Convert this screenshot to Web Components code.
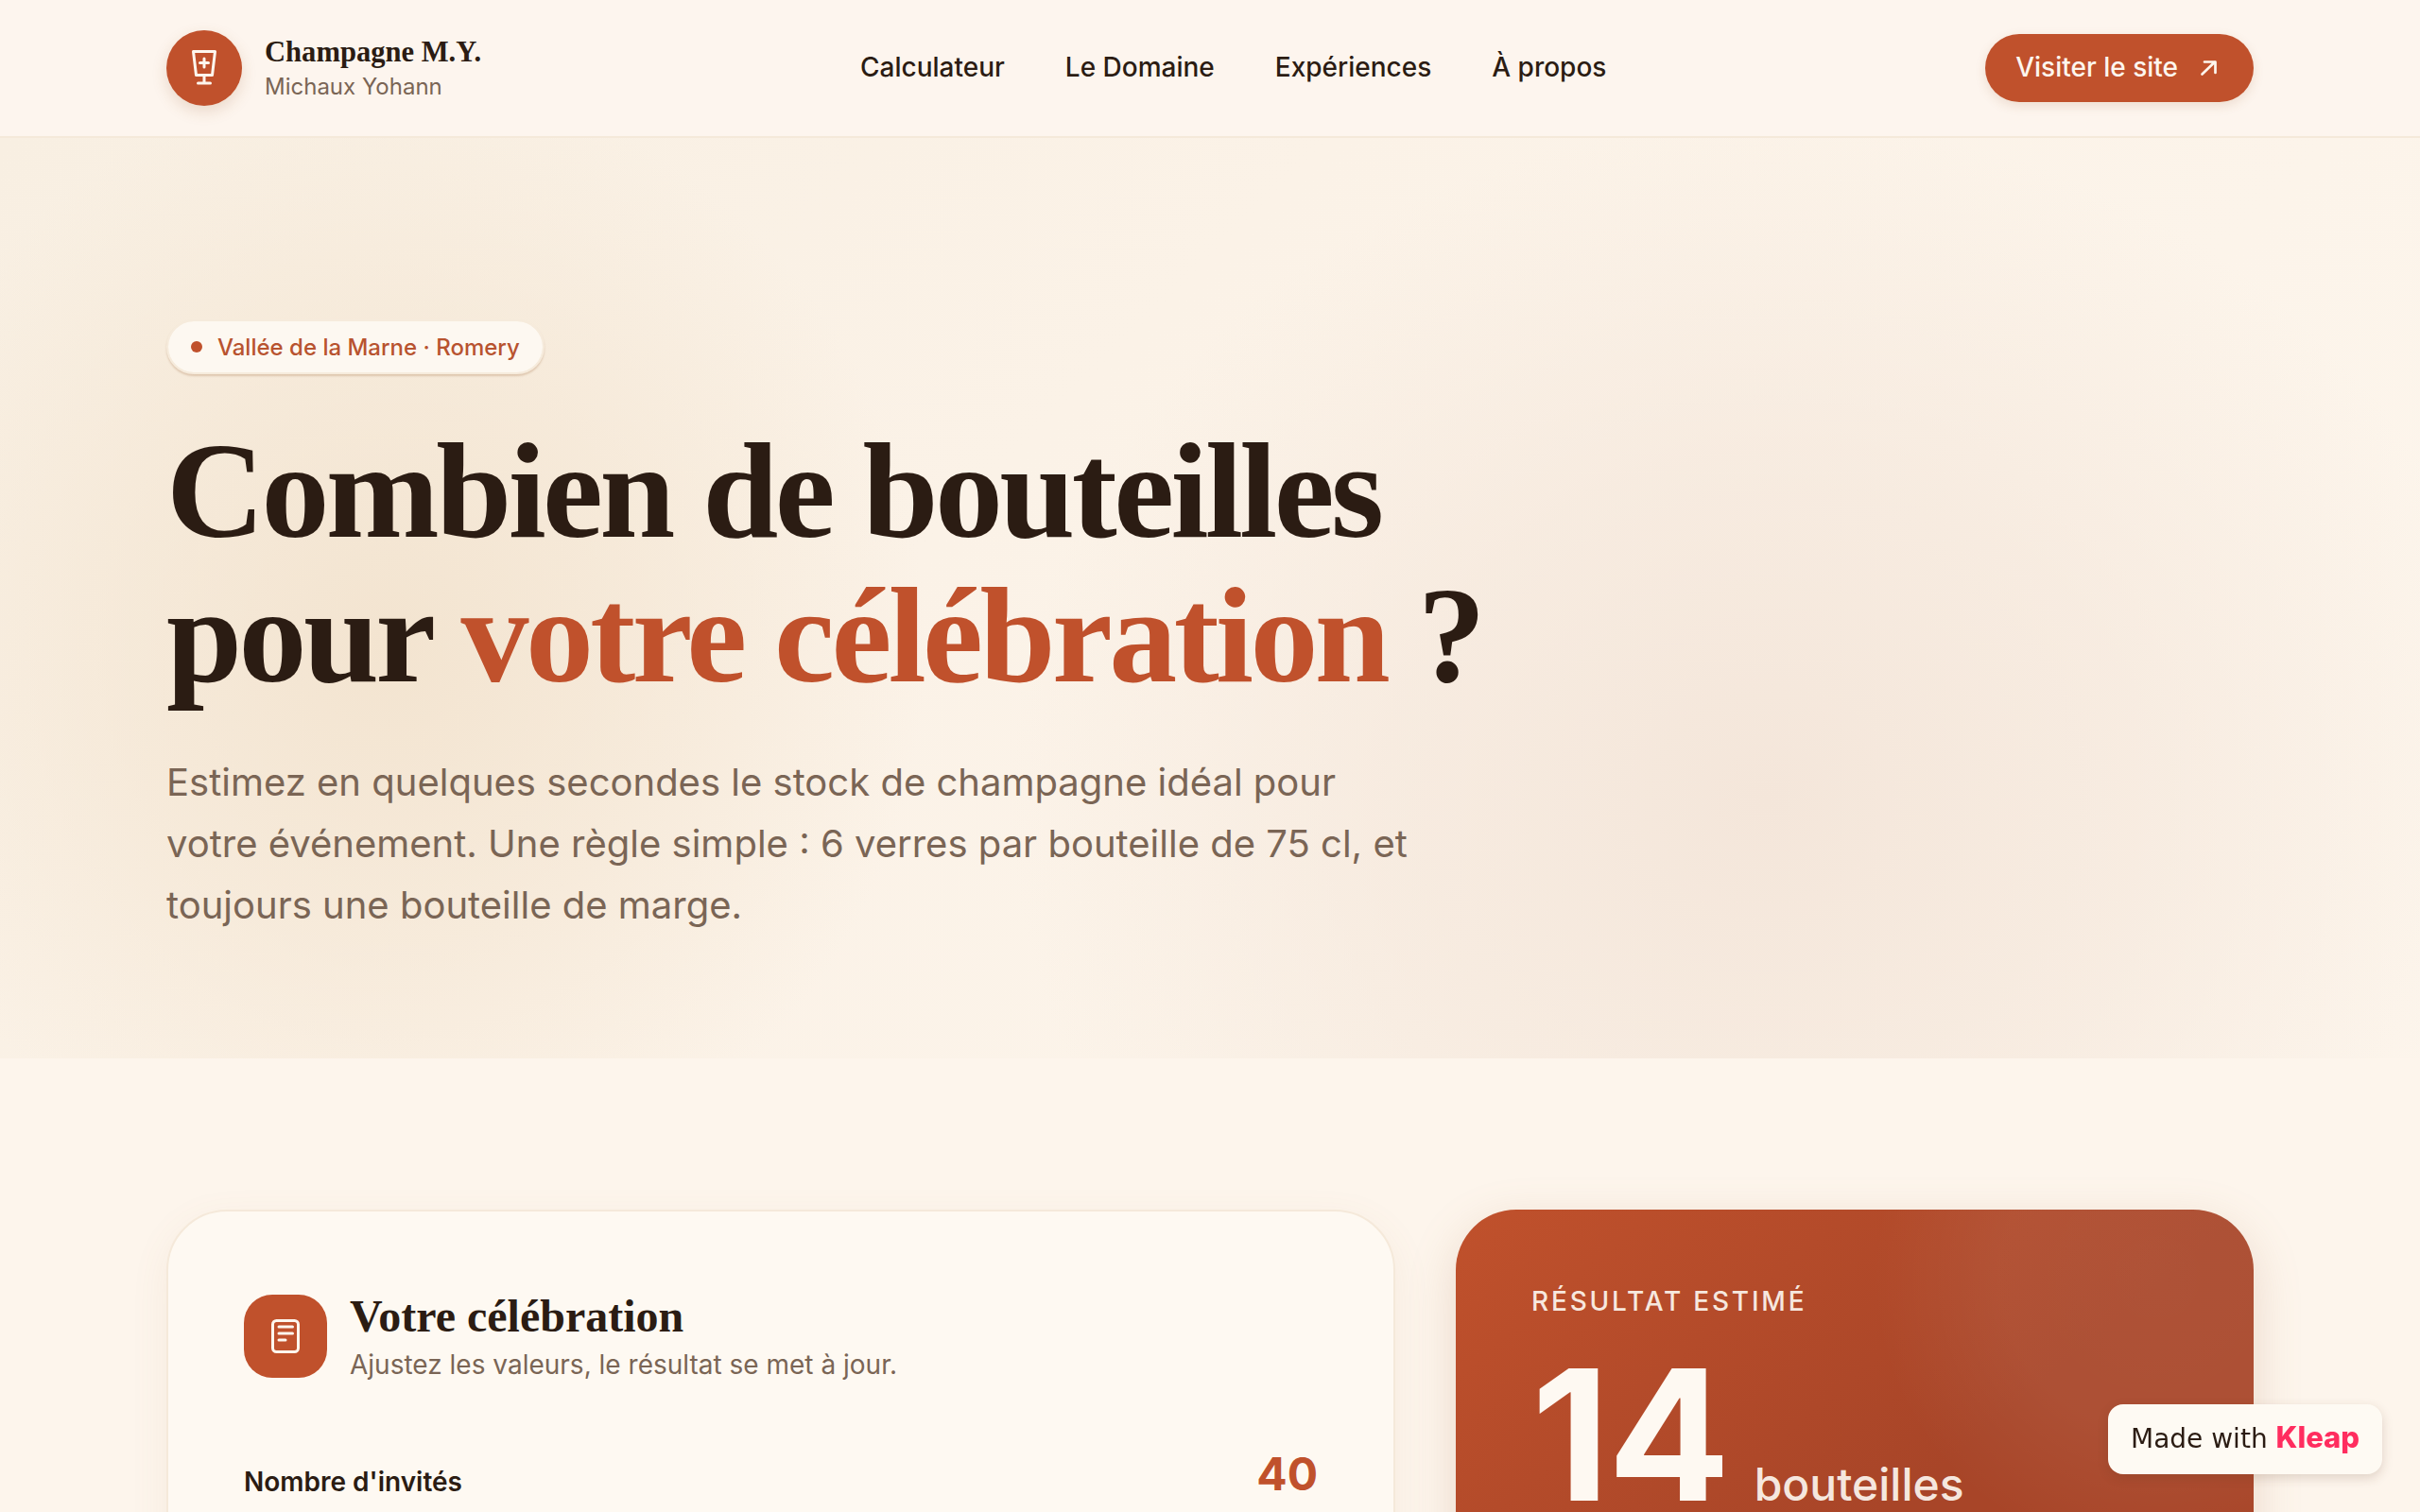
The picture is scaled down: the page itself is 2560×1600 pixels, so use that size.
<!DOCTYPE html>
<html lang="fr">
<head>
<meta charset="utf-8">
<title>Champagne M.Y.</title>
<style>
  html, body { margin: 0; height: 1600px; overflow: hidden; background: #fdf5ec; }
  body { font-family: "Inter", "Liberation Sans", sans-serif; color: #2b1c13; }
</style>
</head>
<body>
<site-header>
  <nav-link>Calculateur</nav-link>
  <nav-link>Le Domaine</nav-link>
  <nav-link>Expériences</nav-link>
  <nav-link>À propos</nav-link>
</site-header>
<hero-section>
  <pill-badge>Vallée de la Marne · Romery</pill-badge>
  <span slot="line1">Combien de bouteilles</span>
  <span slot="line2">pour <em style="font-style:normal;color:#c0512c">votre célébration</em> ?</span>
  <span slot="lead">Estimez en quelques secondes le stock de champagne idéal pour votre événement. Une règle simple : 6 verres par bouteille de 75 cl, et toujours une bouteille de marge.</span>
</hero-section>
<calc-section>
  <calc-card></calc-card>
  <result-card></result-card>
</calc-section>
<kleap-badge></kleap-badge>

<script>
// header
class SiteHeader extends HTMLElement {
  constructor() {
    super();
    this.attachShadow({ mode: "open" }).innerHTML = `
      <style>
        :host { display: flex; align-items: center; justify-content: space-between; height: 144px; padding: 0 176px; background: #fdf5ee; border-bottom: 2px solid #f5e9da; position: relative; }
        .brand { display: flex; align-items: center; gap: 24px; width: 734px; }
        .logo { width: 80px; height: 80px; border-radius: 50%; background: #c0512c; display: flex; align-items: center; justify-content: center; box-shadow: 0 6px 16px rgba(150,90,40,.18); }
        .name { font: bold 30.6px/36px "Liberation Serif", serif; color: #2b1c13; }
        .sub { font: 400 24px/32px "Inter", sans-serif; color: #7a6555; margin-top: 3px; }
        nav { display: flex; gap: 64px; flex: 1; margin-top: -2px; }
        .cta { display: flex; align-items: center; gap: 20px; height: 72px; padding: 0 36px 0 32px; border-radius: 36px; background: #c0512c; color: #fdf6ee; font: 500 28px "Inter", sans-serif; box-shadow: 0 4px 12px rgba(150,90,40,.15); }
        .cta span { margin-top: -2px; }
      </style>
      <div class="brand">
        <div class="logo">
          <svg width="32" height="40" viewBox="0 0 32 40" fill="none" stroke="#fdf6ee" stroke-width="3" stroke-linecap="round" stroke-linejoin="round">
            <path d="M4.5 2.500H27.500L24.500 27.500H7.500Z"/>
            <path d="M16 27.500V36M9.500 36H22.500"/>
            <path d="M16 10V19M11.500 14.500H20.500"/>
          </svg>
        </div>
        <div>
          <div class="name">Champagne M.Y.</div>
          <div class="sub">Michaux Yohann</div>
        </div>
      </div>
      <nav><slot></slot></nav>
      <div class="cta"><span>Visiter le site</span>
        <svg width="24" height="24" viewBox="0 0 24 24" fill="none" stroke="#fdf6ee" stroke-width="2.700" stroke-linecap="round" stroke-linejoin="round"><path d="M5.500 18.500 19 5.500M8 5.500H19.500V17"/></svg>
      </div>`;
  }
}
customElements.define("site-header", SiteHeader);

class NavLink extends HTMLElement {
  constructor() {
    super();
    this.attachShadow({ mode: "open" }).innerHTML = `
      <style>:host { display: block; font: 500 28px/36px "Inter", sans-serif; color: #2b1c13; }</style>
      <slot></slot>`;
  }
}
customElements.define("nav-link", NavLink);

// hero
class HeroSection extends HTMLElement {
  constructor() {
    super();
    this.attachShadow({ mode: "open" }).innerHTML = `
      <style>
        :host { display: block; height: 974px; box-sizing: border-box; padding: 192px 176px 0;
          background:
            radial-gradient(ellipse 570px 600px at 16% 55%, rgba(243,228,208,1), rgba(243,228,208,.55) 50%, rgba(243,228,208,0) 100%),
            radial-gradient(ellipse 800px 720px at 73% 72%, rgba(244,230,218,1), rgba(244,230,218,.6) 50%, rgba(244,230,218,0) 100%),
            linear-gradient(135deg, #f8efe2 0%, #fbf2e7 40%, #fdf6ed 100%); }
        h1 { margin: 47px 0 0; font: bold 144px/153px "Liberation Serif", serif; color: #2b1c13; letter-spacing: -3.600px; }
        h1 span { display: block; }
        p { margin: 47px 0 0; width: 1340px; font: 400 40px/64.800px "Inter", sans-serif; color: #7a6555; }
      </style>
      <slot></slot>
      <h1><span><slot name="line1"></slot></span><span><slot name="line2"></slot></span></h1>
      <p><slot name="lead"></slot></p>`;
  }
}
customElements.define("hero-section", HeroSection);

class PillBadge extends HTMLElement {
  constructor() {
    super();
    this.attachShadow({ mode: "open" }).innerHTML = `
      <style>
        :host { display: flex; width: fit-content; box-sizing: border-box; align-items: center; gap: 16px; height: 58px; padding: 0 24px; border: 2px solid #f6ebdc; border-radius: 29px; background: #fdf8f1; background-clip: padding-box; color: #b8532f; font: 500 24px "Inter", sans-serif; box-shadow: 0 2px 2px rgba(170,120,80,.3); }
        i { width: 12px; height: 12px; border-radius: 50%; background: #c0512c; }
      </style>
      <i></i><slot></slot>`;
  }
}
customElements.define("pill-badge", PillBadge);

// calculator row
class CalcSection extends HTMLElement {
  constructor() {
    super();
    this.attachShadow({ mode: "open" }).innerHTML = `
      <style>:host { display: grid; grid-template-columns: 1300px 844px; gap: 64px; padding: 160px 176px 0; }</style>
      <slot></slot>`;
  }
}
customElements.define("calc-section", CalcSection);

class CalcCard extends HTMLElement {
  constructor() {
    super();
    this.attachShadow({ mode: "open" }).innerHTML = `
      <style>
        :host { display: block; box-sizing: border-box; height: 700px; padding: 88px 80px; border: 2px solid #f5e9da; border-radius: 64px; background: #fef9f2; box-shadow: 0 12px 40px rgba(170,120,80,.08); }
        .head { display: flex; gap: 24px; align-items: flex-start; }
        .icon { width: 88px; height: 88px; border-radius: 30px; background: #c0512c; display: flex; align-items: center; justify-content: center; }
        h2 { margin: -1px 0 0; font: bold 48px/48px "Liberation Serif", serif; color: #2b1c13; }
        .sub { font: 400 28px/32px "Inter", sans-serif; color: #7a6555; margin-top: 11px; }
        .row { display: flex; justify-content: space-between; align-items: flex-end; margin-top: 74px; }
        label { font: 600 28px/36px "Inter", sans-serif; color: #2b1c13; }
        b { font: 700 48px/52px "Inter", sans-serif; color: #c0512c; }
      </style>
      <div class="head">
        <div class="icon">
          <svg width="30" height="36" viewBox="0 0 30 36" fill="none" stroke="#fdf6ee" stroke-width="3" stroke-linecap="round"><rect x="1.500" y="1.500" width="27" height="33" rx="4"/><path d="M8 8H22.500M8 15H22.500M8 22H15"/></svg>
        </div>
        <div>
          <h2>Votre célébration</h2>
          <div class="sub">Ajustez les valeurs, le résultat se met à jour.</div>
        </div>
      </div>
      <div class="row"><label>Nombre d'invités</label><b>40</b></div>`;
  }
}
customElements.define("calc-card", CalcCard);

class ResultCard extends HTMLElement {
  constructor() {
    super();
    this.attachShadow({ mode: "open" }).innerHTML = `
      <style>
        :host { display: block; box-sizing: border-box; height: 700px; padding: 79px 80px; border-radius: 64px; color: #fef9f2;
          background:
            radial-gradient(circle 300px at 740px 70px, rgba(255,255,255,.07), rgba(255,255,255,.06) 55%, rgba(255,255,255,0) 100%),
            linear-gradient(140deg, #c0512c 0%, #a84528 50%, #a84528 100%);
          box-shadow: 0 16px 50px rgba(170,120,80,.22); }
        .label { font: 500 28px/36px "Inter", sans-serif; letter-spacing: 2.800px; opacity: .9; }
        .num { display: flex; align-items: baseline; gap: 27px; margin-top: 27px; }
        .big { font: 700 192px/192px "Inter", sans-serif; letter-spacing: -2px; }
        .unit { font: 500 48px/56px "Inter", sans-serif; opacity: .9; }
      </style>
      <div class="label">RÉSULTAT ESTIMÉ</div>
      <div class="num"><span class="big">14</span><span class="unit">bouteilles</span></div>`;
  }
}
customElements.define("result-card", ResultCard);

// floating badge, sits above the page content
class KleapBadge extends HTMLElement {
  constructor() {
    super();
    this.attachShadow({ mode: "open" }).innerHTML = `
      <style>
        :host { position: fixed; right: 40px; bottom: 40px; display: block; box-sizing: border-box; width: 290px; padding: 0 24px; height: 74px; border-radius: 16px; background: #fefaf3; color: #2b1c13; font: 400 28px/70px "DejaVu Sans", sans-serif; white-space: nowrap; box-shadow: 0 4px 12px rgba(90,50,30,.18); }
        b { color: #ff2d5f; font: 800 31px/70px "Inter", sans-serif; }
      </style>
      Made with <b>Kleap</b>`;
  }
}
customElements.define("kleap-badge", KleapBadge);
</script>
</body>
</html>
